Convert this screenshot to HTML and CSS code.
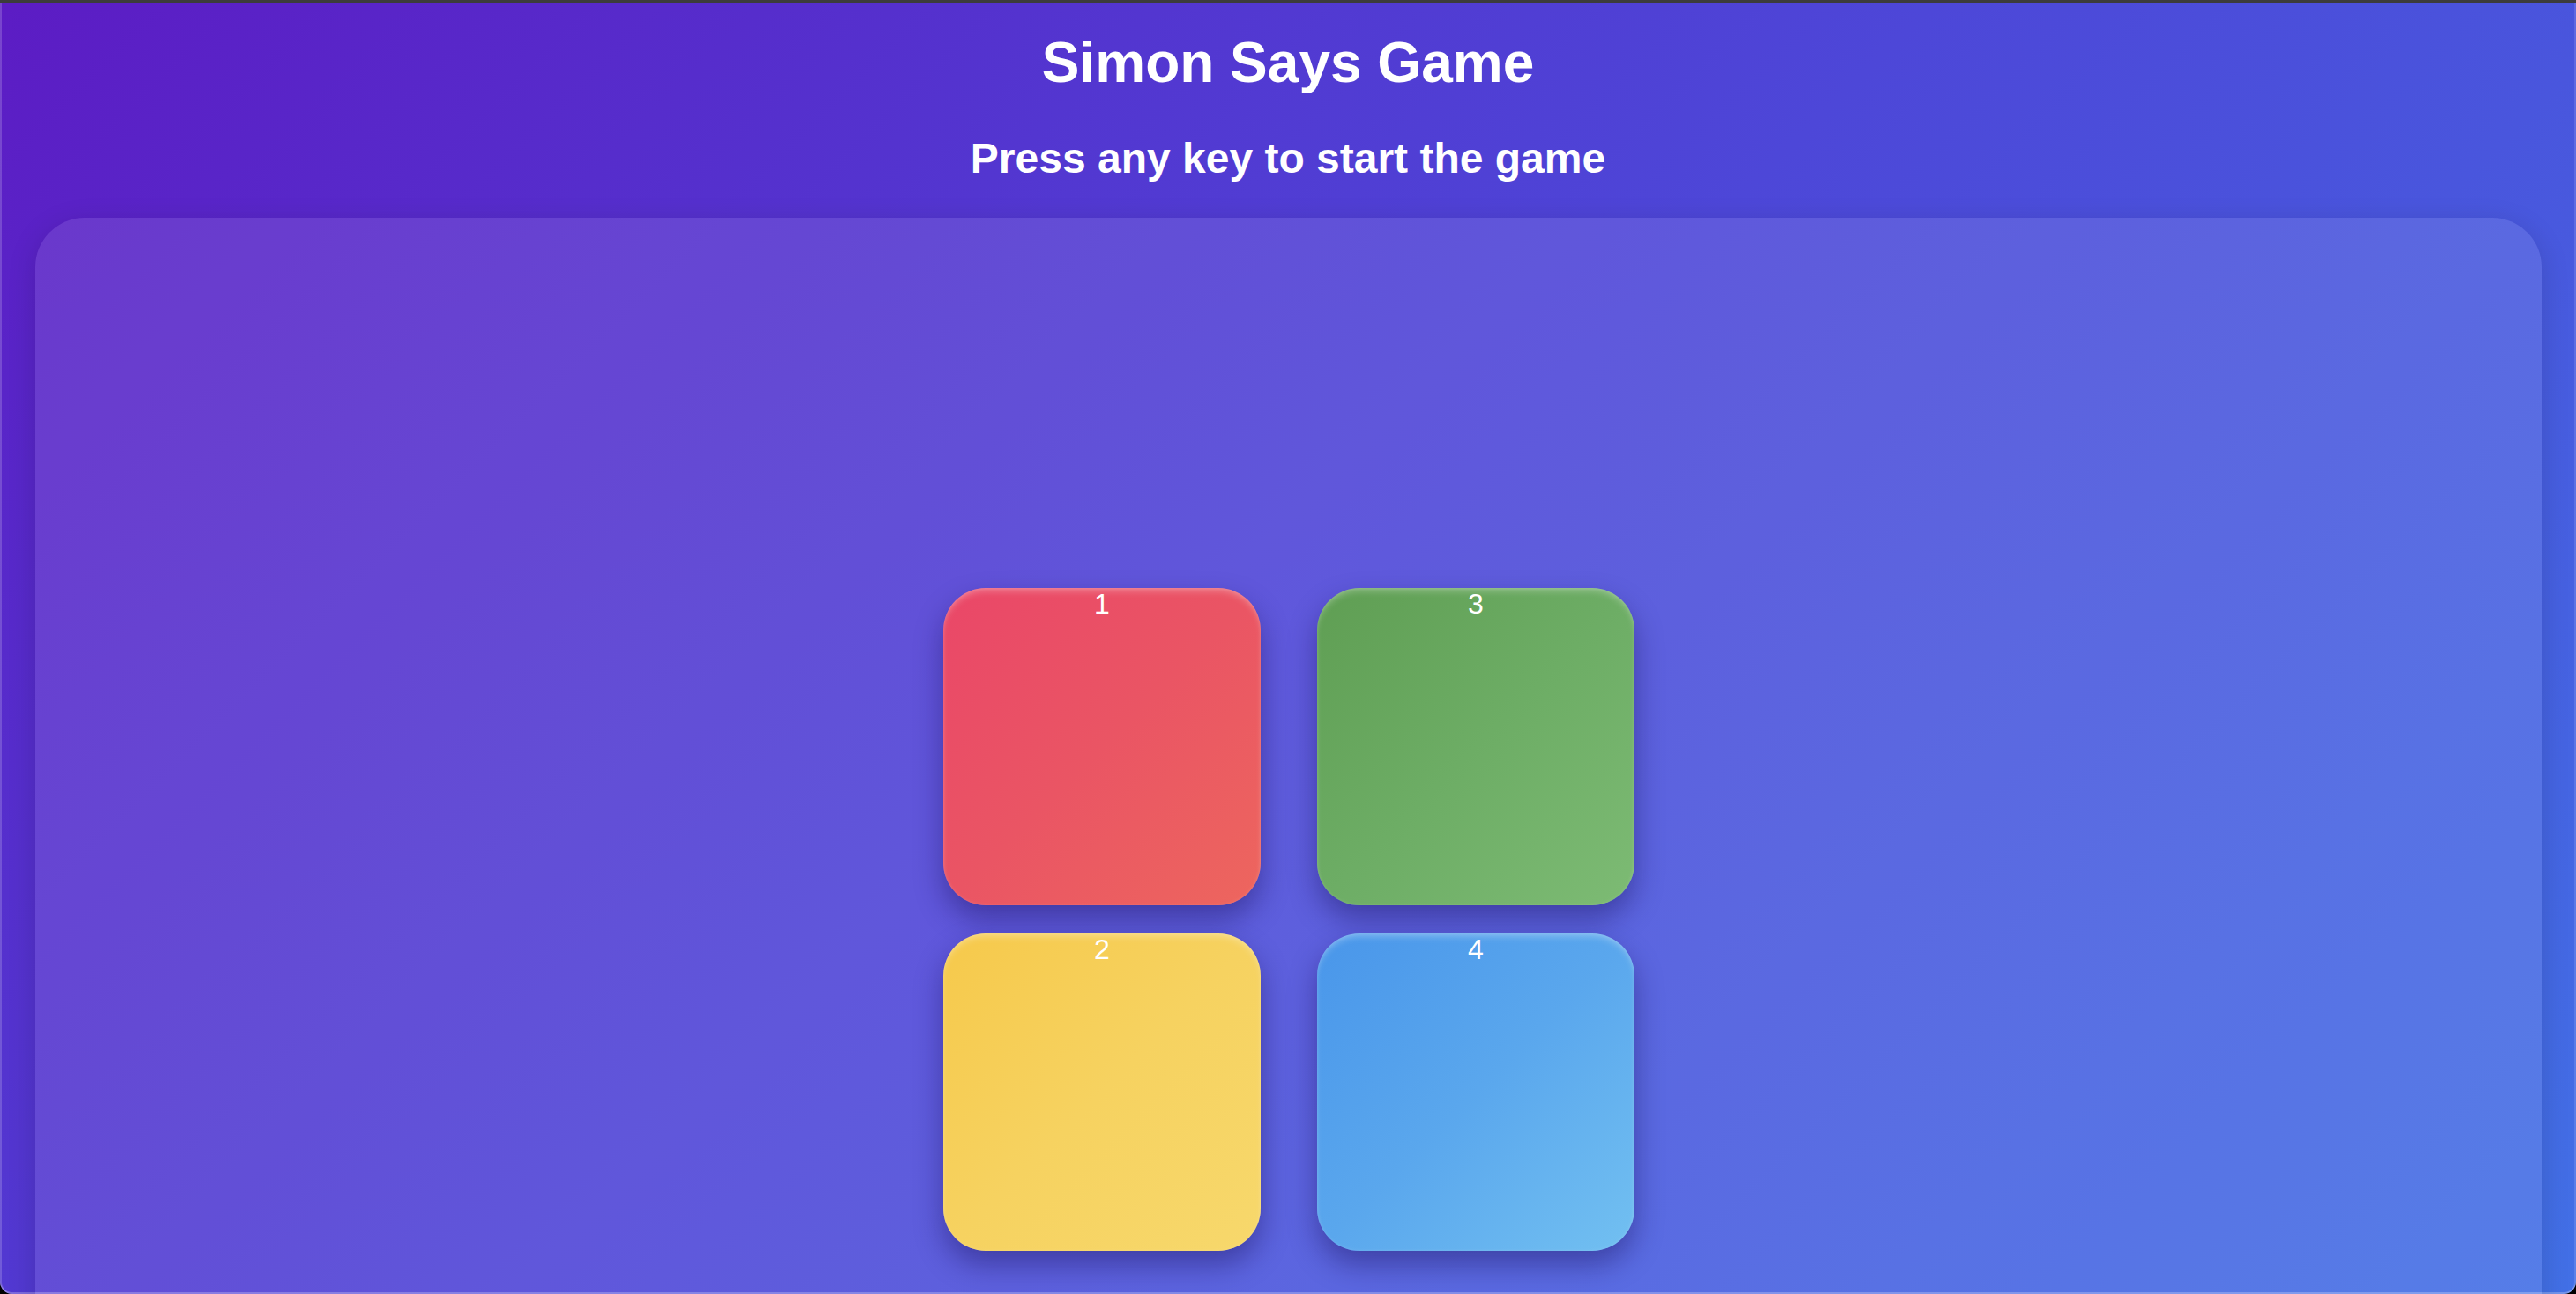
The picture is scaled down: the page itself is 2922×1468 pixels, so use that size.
FILE: index.html
```html
<!DOCTYPE html>
<html lang="en">
<head>
<meta charset="utf-8">
<title>Simon Says Game</title>
<link rel="stylesheet" href="styles.css">
</head>
<body>
<div class="window">
  <h1 class="title">Simon Says Game</h1>
  <h2 class="status">Press any key to start the game</h2>
  <main class="board">
    <div class="grid">
      <div class="pad pad-red">1</div>
      <div class="pad pad-green">3</div>
      <div class="pad pad-yellow">2</div>
      <div class="pad pad-blue">4</div>
    </div>
  </main>
</div>
</body>
</html>
```

FILE: styles.css
```css
html {
  background: #000;
}
body {
  margin: 0;
  height: 1468px;
  overflow: hidden;
  font-family: "Liberation Sans", Arial, Helvetica, sans-serif;
  color: #fff;
}
.window {
  height: 1468px;
  box-sizing: border-box;
  border-top: 3px solid #3c3c3c;
  border-radius: 0 0 14px 14px;
  overflow: hidden;
  background: linear-gradient(135deg, #5c1cc4 0%, #4d47d8 50%, #4270e6 100%);
  box-shadow: inset 2px 0 0 rgba(255, 255, 255, 0.18), inset -2px 0 0 rgba(255, 255, 255, 0.12), inset 0 -2px 0 rgba(255, 255, 255, 0.25);
  display: flex;
  flex-direction: column;
  align-items: center;
}
.title {
  margin: 32px 0 0;
  font-size: 64px;
  line-height: 1.15;
  font-weight: 700;
  text-align: center;
}
.status {
  margin: 43px 0 0;
  font-size: 48px;
  line-height: 1.15;
  font-weight: 700;
  text-align: center;
}
.board {
  align-self: stretch;
  margin: 40px 39px 0 40px;
  padding: 420px 0 400px;
  border-radius: 56px;
  background: rgba(255, 255, 255, 0.1);
  box-shadow: 0 8px 32px rgba(0, 0, 0, 0.15);
  display: flex;
  justify-content: center;
}
.grid {
  display: grid;
  grid-template-columns: 360px 360px;
  grid-auto-rows: 360px;
  column-gap: 64px;
  row-gap: 32px;
  margin-left: 1px;
}
.pad {
  border-radius: 48px;
  display: flex;
  justify-content: center;
  align-items: flex-start;
  font-size: 32px;
  line-height: 37px;
  color: #fff;
  box-shadow: 0 16px 32px rgba(20, 10, 80, 0.4), inset 0 6px 8px -3px rgba(255, 255, 255, 0.32), inset 0 0 4px rgba(255, 255, 255, 0.12);
}
.pad-red {
  background: linear-gradient(135deg, #ea4768 0%, #ea5564 50%, #ed665e 100%);
}
.pad-green {
  background: linear-gradient(135deg, #5f9e53 0%, #6dad65 50%, #7dbb74 100%);
}
.pad-yellow {
  background: linear-gradient(135deg, #f6c94b 0%, #f6d260 50%, #f7d86c 100%);
}
.pad-blue {
  background: linear-gradient(135deg, #4996ea 0%, #5aa7ed 50%, #72c0f1 100%);
}
```
